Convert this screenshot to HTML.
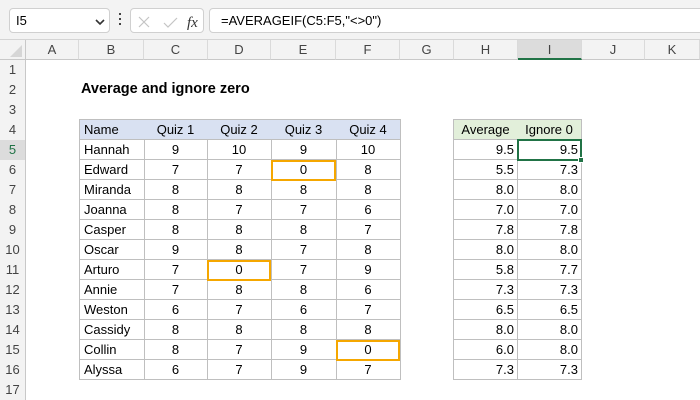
<!DOCTYPE html>
<html><head><meta charset="utf-8"><style>
*{margin:0;padding:0;box-sizing:border-box}
body{width:700px;height:400px;background:#fff;font-family:"Liberation Sans",Arial,sans-serif;position:relative;overflow:hidden;color:#000}
.top{position:absolute;left:0;top:0;width:700px;height:40px;background:#f3f3f3;border-bottom:1px solid #d4d4d4}
.box{position:absolute;background:#fff;border:1px solid #d0d0d0;border-radius:4px}
.colh{position:absolute;top:40px;height:20px;background:#f3f3f3;border-bottom:1px solid #c8c8c8;font-size:13px;color:#444;text-align:center;line-height:19px;border-right:1px solid #dadada}
.rowh{position:absolute;left:0;width:26px;height:20px;background:#f3f3f3;border-right:1px solid #c8c8c8;font-size:13px;color:#444;text-align:center;line-height:20px}
.c{position:absolute;height:20px;font-size:13px;line-height:20px;border-right:1px solid #bfbfbf;border-bottom:1px solid #bfbfbf;text-align:center}
.l{text-align:left;padding-left:4px;border-left:1px solid #bfbfbf}
.r{text-align:right;padding-right:3px}
.hb{background:#d9e1f2}
.hg{background:#e2efda}
.o{position:absolute;border:2px solid #f5a700}
</style></head><body>
<div class="top"></div>
<div class="box" style="left:9px;top:8px;width:101px;height:25px"><span style="position:absolute;left:6px;top:4px;font-size:13px">I5</span><svg style="position:absolute;left:85px;top:9px" width="10" height="8"><path d="M1 2l4 4 4-4" fill="none" stroke="#333" stroke-width="1.6"/></svg></div>
<div style="position:absolute;left:119px;top:13px;width:2px;height:2px;background:#444;box-shadow:0 5px #444,0 10px #444"></div>
<div class="box" style="left:130px;top:8px;width:74px;height:25px">
<svg style="position:absolute;left:5px;top:5px" width="70" height="16"><path d="M3 3l10 10M13 3L3 13" stroke="#c4c4c4" stroke-width="1.2"/><path d="M28 9l4 4 9-9" fill="none" stroke="#c4c4c4" stroke-width="1.2"/><text x="51" y="13" font-family="Liberation Serif" font-style="italic" font-size="15" fill="#333">fx</text></svg></div>
<div class="box" style="left:209px;top:8px;width:495px;height:25px"><span style="position:absolute;left:11px;top:4px;font-size:13px">=AVERAGEIF(C5:F5,"&lt;&gt;0")</span></div>
<div style="position:absolute;left:0;top:40px;width:26px;height:20px;background:#f3f3f3;border-right:1px solid #c8c8c8;border-bottom:1px solid #c8c8c8"><svg width="26" height="20"><path d="M22 5L22 17L10 17Z" fill="#d6d6d6"/></svg></div>
<div class="colh" style="left:26px;width:53px">A</div>
<div class="colh" style="left:79px;width:65px">B</div>
<div class="colh" style="left:144px;width:64px">C</div>
<div class="colh" style="left:208px;width:63px">D</div>
<div class="colh" style="left:271px;width:65px">E</div>
<div class="colh" style="left:336px;width:64px">F</div>
<div class="colh" style="left:400px;width:54px">G</div>
<div class="colh" style="left:454px;width:64px">H</div>
<div class="colh" style="left:518px;width:64px;background:#dcdcdc;border-bottom:2px solid #217346">I</div>
<div class="colh" style="left:582px;width:63px">J</div>
<div class="colh" style="left:645px;width:55px">K</div>
<div id="rows"></div>
<div style="position:absolute;left:81px;top:81px;font-size:14.5px;font-weight:bold">Average and ignore zero</div>
<div id="t"></div>
<script>
var rh='';for(var i=1;i<=17;i++){rh+='<div class="rowh" style="top:'+(60+(i-1)*20)+'px'+(i==5?';background:#dcdcdc;color:#217346':'')+'">'+i+'</div>';}
document.getElementById('rows').innerHTML=rh;
var d=[["Hannah",9,10,9,10,"9.5","9.5"],["Edward",7,7,0,8,"5.5","7.3"],["Miranda",8,8,8,8,"8.0","8.0"],["Joanna",8,7,7,6,"7.0","7.0"],["Casper",8,8,8,7,"7.8","7.8"],["Oscar",9,8,7,8,"8.0","8.0"],["Arturo",7,0,7,9,"5.8","7.7"],["Annie",7,8,8,6,"7.3","7.3"],["Weston",6,7,6,7,"6.5","6.5"],["Cassidy",8,8,8,8,"8.0","8.0"],["Collin",8,7,9,0,"6.0","8.0"],["Alyssa",6,7,9,7,"7.3","7.3"]];
var X=[79,144,207,271,336,400],H=[453,517,581];var s='';
function cell(x,w,y,t,cls,extra){return '<div class="c '+cls+'" style="left:'+x+'px;width:'+w+'px;top:'+y+'px;'+(extra||'')+'">'+t+'</div>';}
var hd=["Name","Quiz 1","Quiz 2","Quiz 3","Quiz 4"];
for(var j=0;j<5;j++)s+=cell(X[j],X[j+1]-X[j]+1,119,hd[j],(j==0?'l ':'')+'hb','height:21px;border-top:1px solid #bfbfbf');
s+=cell(453,65,119,"Average","l hg",'height:21px;border-top:1px solid #bfbfbf;text-align:center;padding:0');
s+=cell(517,65,119,"Ignore 0","hg",'height:21px;border-top:1px solid #bfbfbf');
for(var r=0;r<12;r++){var y=140+r*20;
for(var j=0;j<5;j++)s+=cell(X[j],X[j+1]-X[j]+1,y,d[r][j],j==0?'l':'');
s+=cell(453,65,y,d[r][5],'l r');s+=cell(517,65,y,d[r][6],'r');}
s+='<div class="o" style="left:271px;top:160px;width:65px;height:21px"></div>';
s+='<div class="o" style="left:207px;top:260px;width:64px;height:21px"></div>';
s+='<div class="o" style="left:336px;top:340px;width:64px;height:21px"></div>';
s+='<div style="position:absolute;left:517px;top:139px;width:65px;height:22px;border:2px solid #217346"></div>';
s+='<div style="position:absolute;left:578px;top:157px;width:6px;height:6px;background:#217346;border:1px solid #fff"></div>';
document.getElementById('t').innerHTML=s;
</script>
</body></html>
